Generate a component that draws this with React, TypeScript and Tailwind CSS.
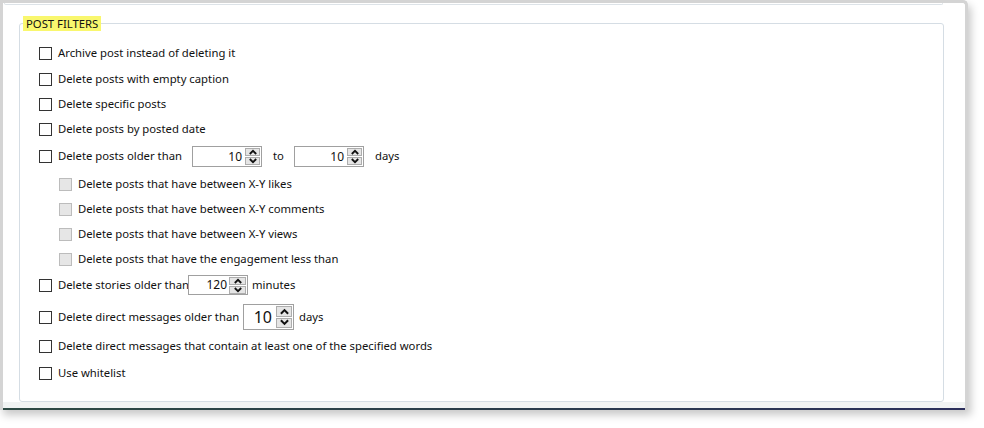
import React from 'react';

const font = { fontFamily: '"Noto Sans", "Open Sans", Arial, sans-serif' };

function Check({ disabled = false }: { disabled?: boolean }) {
  return (
    <span
      className={
        disabled
          ? 'w-[13px] h-[13px] shrink-0 border border-[#bcbcbc] bg-[#e6e6e6]'
          : 'w-[13px] h-[13px] shrink-0 border border-[#333333] bg-white'
      }
    />
  );
}

function Arrow({ up, size }: { up: boolean; size: number }) {
  return (
    <svg width={size} height={size - 2} viewBox="0 0 8 6">
      {up ? (
        <path d="M0.8 5 L4 1.8 L7.2 5" fill="none" stroke="#111" strokeWidth="1.8" />
      ) : (
        <path d="M0.8 1 L4 4.2 L7.2 1" fill="none" stroke="#111" strokeWidth="1.8" />
      )}
    </svg>
  );
}

interface SpinProps {
  value: string;
  w: string;
  h: string;
  text: string;
  btn: string;
  arrow: number;
  pad: string;
}

function Spin({ value, w, h, text, btn, arrow, pad }: SpinProps) {
  return (
    <div className={`${w} ${h} shrink-0 border border-[#a0a0a0] bg-white flex items-stretch p-[1px]`}>
      <span className={`flex-1 flex items-center justify-end ${pad} ${text} text-[#111]`}>{value}</span>
      <div className={`${btn} flex flex-col gap-[1px]`}>
        <span className="flex-1 bg-[#e5e5e5] border border-[#adadad] flex items-center justify-center">
          <Arrow up size={arrow} />
        </span>
        <span className="flex-1 bg-[#e5e5e5] border border-[#adadad] flex items-center justify-center">
          <Arrow up={false} size={arrow} />
        </span>
      </div>
    </div>
  );
}

function Row({ mt, sub = false, label, children, h = 'h-[20px]' }: { mt: string; sub?: boolean; label: React.ReactNode; children?: React.ReactNode; h?: string }) {
  return (
    <div className={`${mt} ${h} flex items-center whitespace-nowrap ${sub ? 'pl-[20px]' : ''}`}>
      <Check disabled={sub} />
      {label}
      {children}
    </div>
  );
}

export default function App() {
  return (
    <div className="w-[984px] h-[428px] bg-white text-[11.3px] text-[#111]" style={font}>
      <div className="w-[968px] h-[410px] border-x-[3px] border-t-[3px] border-[#d4d4d4] rounded-tr-[5px] bg-white shadow-[3px_5px_8px_rgba(0,0,0,0.22)] flex flex-col">
        {/* bottom of the group above */}
        <div className="h-[2px] ml-[1px] mr-[22px] border-x border-b border-[#dde3e8] rounded-b-[3px]" />

        <fieldset className="mt-[11px] ml-[16px] w-[925px] h-[386px] border border-[#d5dde4] rounded-[3px] pl-[19px]">
          <legend className="ml-[-16px] px-[3px] h-[15px] leading-[15px] bg-[#f9f76e]">POST FILTERS</legend>

          <div className="flex flex-col">
            <Row mt="mt-[12px]" label={<span className="ml-[6px]">Archive post instead of deleting it</span>} />
            <Row mt="mt-[6px]" label={<span className="ml-[6px]">Delete posts with empty caption</span>} />
            <Row mt="mt-[5px]" label={<span className="ml-[6px]">Delete specific posts</span>} />
            <Row mt="mt-[5px]" label={<span className="ml-[6px]">Delete posts by posted date</span>} />
            <Row mt="mt-[7px]" h="h-[21px]" label={<span className="ml-[6px] w-[134px] shrink-0">Delete posts older than</span>}>
              <Spin value="10" w="w-[70px]" h="h-[21px]" text="text-[12px]" btn="w-[15px]" arrow={8} pad="pr-[3px]" />
              <span className="w-[32px] shrink-0 pl-[11px]">to</span>
              <Spin value="10" w="w-[70px]" h="h-[21px]" text="text-[12px]" btn="w-[15px]" arrow={8} pad="pr-[3px]" />
              <span className="pl-[11px]">days</span>
            </Row>
            <Row mt="mt-[7px]" sub label={<span className="ml-[6px]">Delete posts that have between X-Y likes</span>} />
            <Row mt="mt-[5px]" sub label={<span className="ml-[6px]">Delete posts that have between X-Y comments</span>} />
            <Row mt="mt-[5px]" sub label={<span className="ml-[6px]">Delete posts that have between X-Y views</span>} />
            <Row mt="mt-[5px]" sub label={<span className="ml-[6px]">Delete posts that have the engagement less than</span>} />
            <Row mt="mt-[6px]" label={<span className="ml-[6px] w-[130px] shrink-0">Delete stories older than</span>}>
              <Spin value="120" w="w-[60px]" h="h-[20px]" text="text-[12px]" btn="w-[17px]" arrow={8} pad="pr-[2px]" />
              <span className="pl-[4px]">minutes</span>
            </Row>
            <Row mt="mt-[9px]" h="h-[26px]" label={<span className="ml-[6px] w-[185px] shrink-0">Delete direct messages older than</span>}>
              <Spin value="10" w="w-[51px]" h="h-[26px]" text="text-[16px]" btn="w-[16px]" arrow={9} pad="pr-[4px]" />
              <span className="pl-[5px]">days</span>
            </Row>
            <Row mt="mt-[6px]" label={<span className="ml-[6px]">Delete direct messages that contain at least one of the specified words</span>} />
            <Row mt="mt-[7px]" label={<span className="ml-[6px]">Use whitelist</span>} />
          </div>
        </fieldset>

        <div className="h-[6px] bg-[#f1f3f3]" />
        <div className="h-[2px] bg-gradient-to-r from-[#2e4a44] via-[#2a3d4a] to-[#2c2f5c]" />
      </div>
    </div>
  );
}
